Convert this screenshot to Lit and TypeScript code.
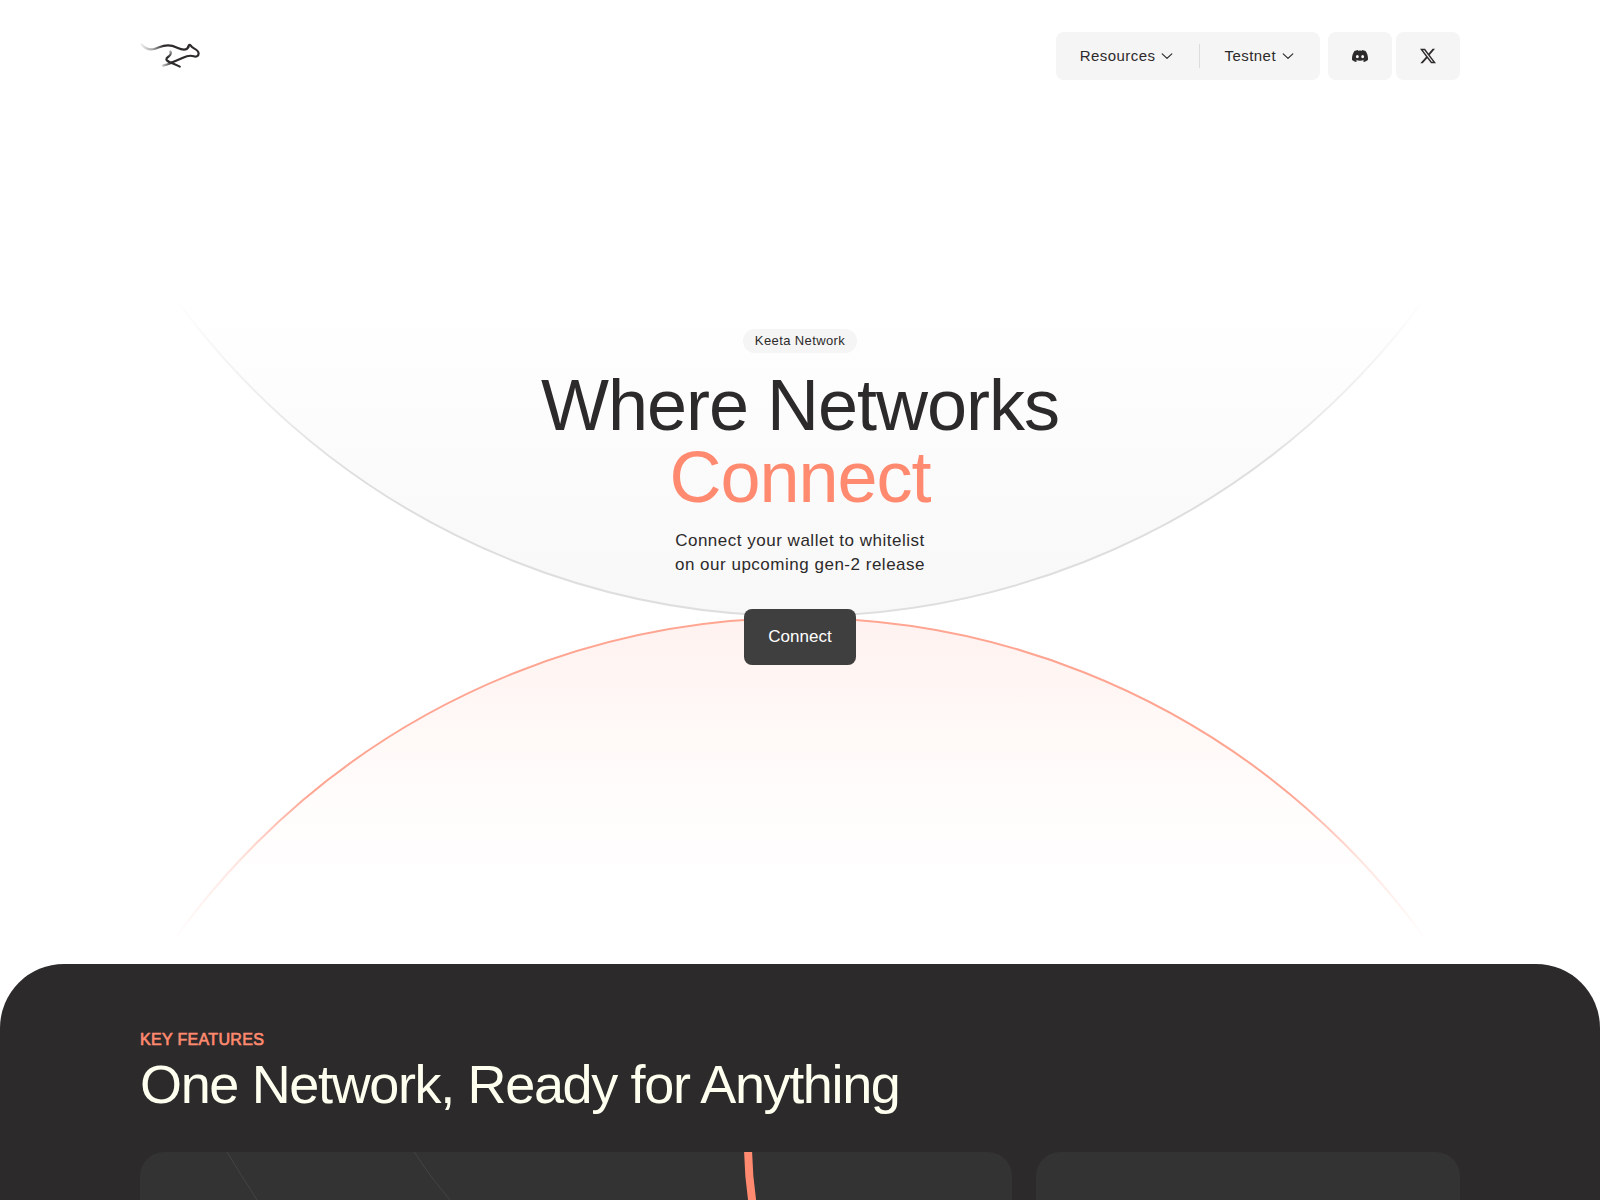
import { LitElement, html, css } from "lit";
import { customElement } from "lit/decorators.js";

const chevron = html`<svg class="chevron" viewBox="0 0 16 16" aria-hidden="true">
  <path d="M3.2 5.9 L8 10.4 L12.8 5.9" />
</svg>`;

const logo = html`<svg class="logo" viewBox="0 0 60 26" aria-hidden="true">
  <defs>
    <linearGradient id="tail" gradientUnits="userSpaceOnUse" x1="0" y1="0" x2="24" y2="0">
      <stop offset="0" stop-color="#2d2a2b" stop-opacity="0.05" />
      <stop offset="0.5" stop-color="#2d2a2b" stop-opacity="0.4" />
      <stop offset="1" stop-color="#2d2a2b" />
    </linearGradient>
    <linearGradient id="paw" gradientUnits="userSpaceOnUse" x1="22" y1="0" x2="32" y2="0">
      <stop offset="0" stop-color="#2d2a2b" stop-opacity="0.2" />
      <stop offset="1" stop-color="#2d2a2b" />
    </linearGradient>
    <linearGradient id="leg" gradientUnits="userSpaceOnUse" x1="0" y1="7" x2="0" y2="14">
      <stop offset="0" stop-color="#2d2a2b" stop-opacity="0.3" />
      <stop offset="1" stop-color="#2d2a2b" />
    </linearGradient>
  </defs>
  <path stroke="url(#tail)" d="M1.5 1.5 C5 5.4 9 7.2 14 6 C19 4.6 22 2.4 28 2.4 C36 2.4 38 6.6 44 6.6 C47 6.6 47.5 5.8 48.3 4" />
  <path stroke="#2d2a2b" d="M48.3 4 C48.6 1.8 49.6 1.3 50.6 2.4 C51.4 3.7 52 4.3 54 5.4 C56.6 6.8 58.6 8.6 58.6 10.4 C58.6 12.8 56.4 14.2 53.8 13.3 C50.6 12.2 47 12.8 43 14.8 C38.5 17 34 18.4 31 19.9" />
  <path stroke="url(#leg)" d="M30.4 8.4 C31.6 10.4 30.4 12.2 28 14 C25.6 15.8 26 17.4 28.4 18.4" />
  <path stroke="#2d2a2b" d="M28.4 18.4 C32 20.2 36 21.6 39.8 23.6" />
  <path stroke="url(#paw)" d="M32 19.5 C29 20.8 27 21.7 23 22.6" />
</svg>`;

const discord = html`<svg class="brand" viewBox="0 0 24 24" aria-hidden="true">
  <path d="M20.317 4.37a19.791 19.791 0 0 0-4.885-1.515.074.074 0 0 0-.079.037c-.21.375-.444.864-.608 1.25a18.27 18.27 0 0 0-5.487 0 12.64 12.64 0 0 0-.617-1.25.077.077 0 0 0-.079-.037A19.736 19.736 0 0 0 3.677 4.37a.07.07 0 0 0-.032.027C.533 9.046-.32 13.58.099 18.057a.082.082 0 0 0 .031.057 19.9 19.9 0 0 0 5.993 3.03.078.078 0 0 0 .084-.028 14.09 14.09 0 0 0 1.226-1.994.076.076 0 0 0-.041-.106 13.107 13.107 0 0 1-1.872-.892.077.077 0 0 1-.008-.128c.126-.094.252-.192.372-.292a.074.074 0 0 1 .077-.01c3.928 1.793 8.18 1.793 12.062 0a.074.074 0 0 1 .078.01c.12.098.246.198.373.292a.077.077 0 0 1-.006.127 12.299 12.299 0 0 1-1.873.892.077.077 0 0 0-.041.107c.36.698.772 1.362 1.225 1.993a.076.076 0 0 0 .084.028 19.839 19.839 0 0 0 6.002-3.03.077.077 0 0 0 .032-.054c.5-5.177-.838-9.674-3.549-13.66a.061.061 0 0 0-.031-.03zM8.02 15.33c-1.183 0-2.157-1.085-2.157-2.419 0-1.333.956-2.419 2.157-2.419 1.21 0 2.176 1.096 2.157 2.42 0 1.333-.956 2.418-2.157 2.418zm7.975 0c-1.183 0-2.157-1.085-2.157-2.419 0-1.333.955-2.419 2.157-2.419 1.21 0 2.176 1.096 2.157 2.42 0 1.333-.946 2.418-2.157 2.418z" />
</svg>`;

const xMark = html`<svg class="brand" viewBox="0 0 16 16" aria-hidden="true">
  <path d="M12.6.75h2.454l-5.36 6.142L16 15.25h-4.937l-3.867-5.07-4.425 5.07H.316l5.733-6.57L0 .75h5.063l3.495 4.633L12.601.75Zm-.86 13.028h1.36L4.323 2.145H2.865z" />
</svg>`;

const arcs = html`<svg class="arcs" viewBox="0 0 1600 964" preserveAspectRatio="xMidYMin slice" aria-hidden="true">
  <defs>
    <linearGradient id="greyFill" gradientUnits="userSpaceOnUse" x1="0" y1="616" x2="0" y2="300">
      <stop offset="0" stop-color="#f8f8f8" />
      <stop offset="0.5" stop-color="#fbfbfb" />
      <stop offset="1" stop-color="#ffffff" />
    </linearGradient>
    <linearGradient id="greyLine" gradientUnits="userSpaceOnUse" x1="0" y1="616" x2="0" y2="296">
      <stop offset="0" stop-color="#dedede" />
      <stop offset="0.45" stop-color="#dedede" />
      <stop offset="0.75" stop-color="#dedede" stop-opacity="0.4" />
      <stop offset="1" stop-color="#dedede" stop-opacity="0" />
    </linearGradient>
    <linearGradient id="coralFill" gradientUnits="userSpaceOnUse" x1="0" y1="618" x2="0" y2="900">
      <stop offset="0" stop-color="#fff2f0" />
      <stop offset="0.35" stop-color="#fff8f6" />
      <stop offset="0.7" stop-color="#fffdfc" />
      <stop offset="1" stop-color="#ffffff" />
    </linearGradient>
    <linearGradient id="coralLine" gradientUnits="userSpaceOnUse" x1="0" y1="618" x2="0" y2="940">
      <stop offset="0" stop-color="#ffa592" />
      <stop offset="0.55" stop-color="#ffa592" />
      <stop offset="0.75" stop-color="#ffa592" stop-opacity="0.3" />
      <stop offset="1" stop-color="#ffa592" stop-opacity="0" />
    </linearGradient>
  </defs>
  <circle cx="800" cy="-157" r="773" fill="url(#greyFill)" stroke="url(#greyLine)" stroke-width="2" />
  <circle cx="800" cy="1387" r="769" fill="url(#coralFill)" stroke="url(#coralLine)" stroke-width="2" />
</svg>`;

@customElement("app-root")
export class AppRoot extends LitElement {
  static styles = css`
    :host {
      display: block;
      min-height: 100vh;
      background: #ffffff;
      color: #2d2a2b;
      font-family: Arial, "Liberation Sans", sans-serif;
      --coral: #ff8a70;
      --soft: #f5f5f5;
    }
    * { box-sizing: border-box; }
    h1, h2, p { margin: 0; font-weight: 400; }
    a { color: inherit; text-decoration: none; }
    .page {
      height: 100vh;
      overflow: hidden;
    }
    .top {
      position: relative;
      padding-bottom: 299px;
    }
    .arcs {
      position: absolute;
      inset: 0;
      width: 100%;
      height: 100%;
    }
    .header {
      position: relative;
      display: flex;
      justify-content: space-between;
      align-items: center;
      padding: 32px 140px 0;
    }
    .logo { display: block; width: 60px; height: 26px; }
    .logo path { fill: none; stroke-width: 2.2; stroke-linecap: round; stroke-linejoin: round; }
    .nav { display: flex; gap: 4px; }
    .menus {
      display: flex;
      align-items: center;
      height: 48px;
      margin-right: 4px;
      border-radius: 8px;
      background: var(--soft);
    }
    .menu {
      display: flex;
      align-items: center;
      gap: 4px;
      height: 24px;
      padding: 0 24px;
      border: 0;
      background: none;
      color: inherit;
      font: inherit;
      font-size: 15px;
      line-height: 16px;
      letter-spacing: 0.03em;
    }
    .menu + .menu { border-left: 1px solid #dcdcdc; }
    .chevron { width: 16px; height: 16px; }
    .chevron path { fill: none; stroke: #2d2a2b; stroke-width: 1.2; stroke-linecap: round; stroke-linejoin: round; }
    .social {
      display: grid;
      place-items: center;
      width: 64px;
      height: 48px;
      border-radius: 8px;
      background: var(--soft);
    }
    .brand { width: 16px; height: 16px; fill: #2d2a2b; }
    .hero {
      position: relative;
      display: flex;
      flex-direction: column;
      align-items: center;
      padding-top: 249px;
      text-align: center;
    }
    .badge {
      padding: 0 12px;
      border-radius: 12px;
      background: var(--soft);
      font-size: 13px;
      line-height: 24px;
      letter-spacing: 0.03em;
    }
    .title {
      margin-top: 16px;
      font-size: 72px;
      line-height: 72px;
      letter-spacing: -1px;
    }
    .accent { display: block; color: var(--coral); }
    .lead {
      margin-top: 16px;
      font-size: 17px;
      line-height: 24px;
      letter-spacing: 0.03em;
    }
    .connect {
      height: 56px;
      margin-top: 32px;
      padding: 0 24px;
      border: 0;
      border-radius: 8px;
      background: #3f3f3f;
      color: #ffffff;
      font: inherit;
      font-size: 17px;
    }
    .features {
      position: relative;
      min-height: 600px;
      padding: 64px 140px;
      border-radius: 64px 64px 0 0;
      background: #2d2a2b;
    }
    .eyebrow {
      color: var(--coral);
      font-size: 16px;
      line-height: 24px;
      letter-spacing: 0.02em;
      -webkit-text-stroke: 0.04em var(--coral);
    }
    .heading {
      color: #fffff0;
      font-size: 54px;
      line-height: 64px;
      letter-spacing: -0.025em;
    }
    .cards {
      display: grid;
      grid-template-columns: 873fr 424fr;
      gap: 24px;
      margin-top: 36px;
    }
    .card {
      height: 420px;
      overflow: hidden;
      border-radius: 24px;
      background: #333333;
    }
    .rings { display: block; width: 872px; height: 420px; fill: none; }
  `;

  render() {
    return html`
      <div class="page">
        <div class="top">
          ${arcs}
          <header class="header">
            <a href="#" aria-label="Keeta">${logo}</a>
            <nav class="nav">
              <div class="menus">
                <button class="menu" type="button">Resources ${chevron}</button>
                <button class="menu" type="button">Testnet ${chevron}</button>
              </div>
              <a class="social" href="#" aria-label="Discord">${discord}</a>
              <a class="social" href="#" aria-label="X">${xMark}</a>
            </nav>
          </header>
          <section class="hero">
            <p class="badge">Keeta Network</p>
            <h1 class="title">Where Networks <span class="accent">Connect</span></h1>
            <p class="lead">Connect your wallet to whitelist<br />on our upcoming gen-2 release</p>
            <button class="connect" type="button">Connect</button>
          </section>
        </div>
        <section class="features">
          <p class="eyebrow">KEY FEATURES</p>
          <h2 class="heading">One Network, Ready for Anything</h2>
          <div class="cards">
            <div class="card">
              <svg class="rings" viewBox="0 0 872 420" aria-hidden="true">
                <path stroke="#444444" d="M87 0 Q101 23 117 48 Q220 220 420 380" />
                <path stroke="#444444" d="M274 0 Q291 26 310 48 Q400 170 520 240" />
                <circle cx="1004" cy="-9" r="396" stroke="#ff8a70" stroke-width="8" />
              </svg>
            </div>
            <div class="card"></div>
          </div>
        </section>
      </div>
    `;
  }
}
